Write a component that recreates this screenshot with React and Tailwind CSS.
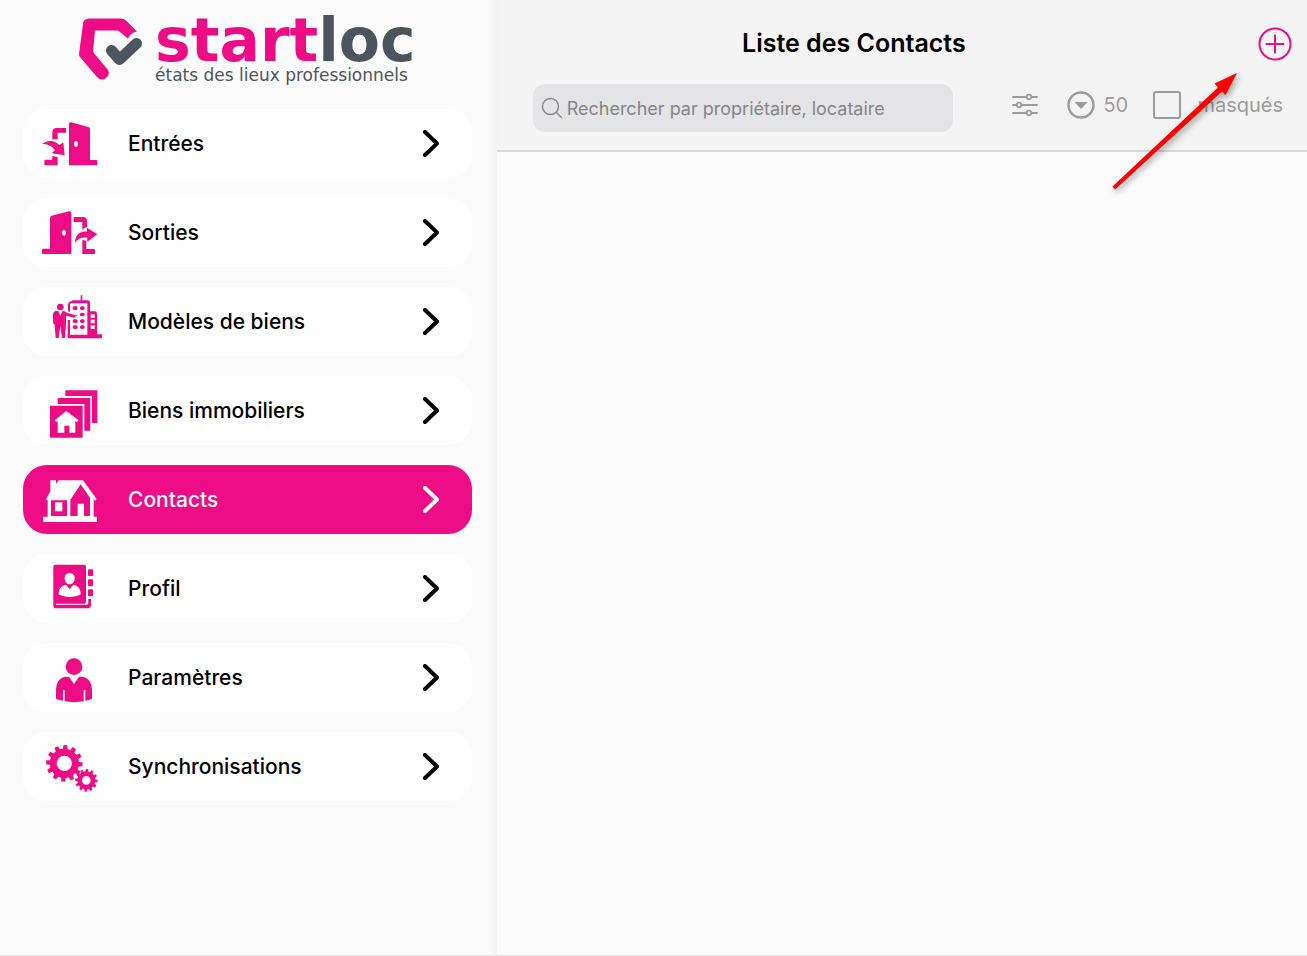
import React, { useState } from 'react';

// Contour d'une roue dentée centrée sur (cx, cy)
const gearPath = (cx, cy, outer, inner, hole, teeth) => {
  const step = (Math.PI * 2) / teeth;
  const points = [];

  for (let i = 0; i < teeth; i++) {
    const a = i * step - Math.PI / 2 + 0.06;
    [
      [inner, -0.3],
      [outer, -0.2],
      [outer, 0.2],
      [inner, 0.3],
    ].forEach(([r, k]) => {
      points.push(`${(cx + r * Math.cos(a + k * step)).toFixed(1)} ${(cy + r * Math.sin(a + k * step)).toFixed(1)}`);
    });
  }

  return `M${points.join('L')}Z M${cx - hole} ${cy}a${hole} ${hole} 0 1 0 ${hole * 2} 0a${hole} ${hole} 0 1 0 ${-hole * 2} 0Z`;
};

const MenuIcon = ({ viewBox, children }) => (
  <svg className="w-16 h-[57px] shrink-0" viewBox={viewBox} fill="currentColor" aria-hidden="true">
    {children}
  </svg>
);

const EntryIcon = () => (
  <MenuIcon viewBox="60 30 192 171">
    <path fillRule="evenodd" d="M147 57q0-6 6-5l52 14q5 1 5 6v93h18q4 0 4 4v12h-85zM168 108c-8 0-8 18 0 18s8-18 0-18z" />
    <path d="M97 104V82q0-13 13-13h28v14h-25v20q-8-3-16 1z" />
    <path d="M66 117c18-14 40-12 52 4l12-9 4 39-39-6 10-9c-9-14-23-19-39-19z" />
    <path d="M97 153l16 3v25H76q-3 0-3-4v-9q0-4 4-4h20z" />
  </MenuIcon>
);

const ExitIcon = () => (
  <MenuIcon viewBox="60 297 192 171">
    <path fillRule="evenodd" d="M154 447H69q-3 0-3-4v-8q0-4 4-4h20v-93q0-5 5-6l52-13q7-1 7 6zM132 375c-8 0-8 17 0 17s8-17 0-17z" />
    <path d="M161 336h28q12 0 12 12v18l-12 6-2 6V351h-26z" />
    <path d="M165 413c1-24 16-35 36-33v-12l31 20-30 22v-12c-16-3-28 2-37 15z" />
    <path d="M187 405l12 2v25h22q4 0 4 4v11h-38z" />
  </MenuIcon>
);

const ModelIcon = () => (
  <MenuIcon viewBox="60 39 192 171">
    <circle cx="121" cy="81" r="10" />
    <path d="M106 93h9l6 15 6-15q9 0 15 6l22 6q4 4 0 8l-26-6v25l-3 42h-9l-5-35-5 35h-9l-3-40q-5-1-5-7v-24q0-8 7-10z" />
    <path d="M144 94V75q0-10 11-11l3-3h24V46h5v15h18l5 5v28h14q7 0 7 7v62h15v12H143v-11h59V72q0-2-2-2h-46q-4 0-4 4v22z" />
    <path d="M143 120h7v46h-7z" />
    {[84, 103, 123, 141].map((y) => (
      <g key={y}>
        {y !== 103 && <rect x="158" y={y - 5} width="15" height="11" rx="5" />}
        <rect x="180" y={y - 5} width="14" height="11" rx="5" />
      </g>
    ))}
    <path d="M164 102l8 5-4 3z" />
    <g fill="white">
      <rect x="212" y="103" width="12" height="11" />
      <rect x="212" y="119" width="12" height="11" />
      <rect x="212" y="136" width="12" height="11" />
    </g>
  </MenuIcon>
);

const PropertyIcon = () => (
  <MenuIcon viewBox="60 306 192 171">
    <path d="M136 331h96v98h-16v-81h-80z" />
    <path d="M113 354h98v98h-18v-80h-80z" />
    <path fillRule="evenodd" d="M90 377h98v96H90zM139 393l-35 28 5 5 4-3v35h20v-21h15v21h18v-35l5 3 5-5z" />
  </MenuIcon>
);

const HouseIcon = () => (
  <MenuIcon viewBox="60 48 192 171">
    <path fillRule="evenodd" d="M91 76h17v10l8-10h73l41 56-5 5-4-4v52h10v16H69v-16h14v-50h-6l14-26zM93 136v47h48v-47zM182 88l-31 46v49h22v-37h19v37h18v-55z" />
    <path d="M105 142h22v27h-22z" />
  </MenuIcon>
);

const AddressBookIcon = () => (
  <MenuIcon viewBox="60 314 192 171">
    <path fillRule="evenodd" d="M106 328h87q5 0 5 5v106q0 6-6 6h-84v3h92q5 0 5-5v-12h8v17q0 11-11 11h-94q-8 0-8-8V334q0-6 6-6zM149 353c-10 0-16 8-15 17 1 10 7 17 15 17s14-7 15-17c1-9-5-17-15-17zM138 389c-15 2-22 12-22 28 20 11 46 11 66 0 0-16-7-26-22-28l-11 12z" />
    <rect x="204" y="342" width="15" height="20" rx="3" />
    <rect x="204" y="372" width="15" height="21" rx="3" />
    <rect x="204" y="402" width="15" height="21" rx="3" />
  </MenuIcon>
);

const PersonIcon = () => (
  <MenuIcon viewBox="60 41 192 171">
    <circle cx="162" cy="94" r="25" />
    <path d="M134 124h13l15 22 15-22h12q27 7 27 40v26q-9 5-20 6v-31h-5v33q-29 5-57 0v-33h-5v31q-12-1-21-6v-26q0-33 26-40z" />
  </MenuIcon>
);

const GearsIcon = () => (
  <MenuIcon viewBox="60 308 192 171">
    <path fillRule="evenodd" d={gearPath(133, 384, 55, 44, 23, 12)} />
    <path fillRule="evenodd" d={gearPath(199, 435, 34, 27, 13, 12)} />
  </MenuIcon>
);

const menuItems = [
  { id: 'entrees', label: 'Entrées', Icon: EntryIcon },
  { id: 'sorties', label: 'Sorties', Icon: ExitIcon },
  { id: 'modeles', label: 'Modèles de biens', Icon: ModelIcon },
  { id: 'biens', label: 'Biens immobiliers', Icon: PropertyIcon },
  { id: 'contacts', label: 'Contacts', Icon: HouseIcon },
  { id: 'profil', label: 'Profil', Icon: AddressBookIcon },
  { id: 'parametres', label: 'Paramètres', Icon: PersonIcon },
  { id: 'synchronisations', label: 'Synchronisations', Icon: GearsIcon },
];

const Logo = () => (
  <div className="flex justify-center pt-4 h-[109px]">
    <svg className="w-16 h-16 mr-3 shrink-0" viewBox="0 0 64 64" fill="none" aria-hidden="true">
      <path fill="#ed0b86" d="M10 2.500h32q3 0 5 2l11 11q-6 1-9 7l-10-8H16L14 36l15 18q2 4-1 7-5 5-10 0L1 41q-1-1-1-3L4 8q0-5 6-5.500z" />
      <path d="M32.500 34.500L40.500 43.500L57.500 27.500" stroke="#4c545d" strokeWidth="11" strokeLinecap="round" strokeLinejoin="round" />
    </svg>
    <div className="font-['DejaVu_Sans',sans-serif] text-[#4c545d] whitespace-nowrap">
      <div className="font-bold text-[60px] leading-[48px]">
        <span className="text-[#ed0b86]">start</span>loc
      </div>
      <div className="text-[17px] leading-[22px]">états des lieux professionnels</div>
    </div>
  </div>
);

const Sidebar = ({ active, onSelect }) => (
  <aside className="relative w-[38%] shrink-0 bg-[#fbfbfb] pl-[23px] pr-[25px]">
    <Logo />
    <nav className="flex flex-col gap-5">
      {menuItems.map(({ id, label, Icon }) => (
        <a
          key={id}
          href={`#${id}`}
          onClick={() => onSelect(id)}
          className={`flex items-center h-[69px] pl-[17px] pr-[33px] rounded-3xl text-[21px] font-medium ${
            active === id ? 'bg-[#ed0b86] text-white' : 'bg-white text-black'
          }`}
        >
          <span className={active === id ? 'text-white' : 'text-[#ed0b86]'}>
            <Icon />
          </span>
          <span className="flex-1 ml-6">{label}</span>
          <svg className="w-4 h-7" viewBox="0 0 16 28" fill="none" stroke="currentColor" strokeWidth="4" strokeLinecap="round" strokeLinejoin="round" aria-hidden="true">
            <path d="M2 2L14 13.500L2 25" />
          </svg>
        </a>
      ))}
    </nav>
    <div className="absolute inset-y-0 right-0 w-2 bg-linear-to-r from-[#fbfbfb] to-[#f1f1f1]"></div>
  </aside>
);

const Header = () => {
  const [search, setSearch] = useState('');
  const [limit, setLimit] = useState('50');
  const [showHidden, setShowHidden] = useState(false);

  return (
    <header className="bg-[#f4f4f4] border-b-2 border-[#d8d8d8] pt-6 pb-[18px]">
      <div className="flex items-center h-10">
        <h1 className="flex-1 text-center text-[25px] font-semibold text-black">Liste des Contacts</h1>
        <div className="w-24 flex justify-end pr-[15px]">
          <button type="button" aria-label="Ajouter un contact">
            <svg className="w-[34px] h-[34px] block" viewBox="0 0 34 34" fill="none" stroke="#ed0b86" strokeWidth="2">
              <circle cx="17" cy="17" r="15.500" />
              <path d="M17 8.500V25.500M8.500 17H25.500" strokeLinecap="round" />
            </svg>
          </button>
        </div>
      </div>

      <div className="flex items-center mt-5 pl-9 pr-6 gap-[58px]">
        <label className="flex flex-1 min-w-0 items-center h-12 px-2 gap-1 rounded-xl bg-[#e4e4e6]">
          <svg className="w-[22px] h-[22px] shrink-0" viewBox="0 0 22 22" fill="none" stroke="#858587" strokeWidth="1.400" strokeLinecap="round" aria-hidden="true">
            <circle cx="9.500" cy="9.500" r="8" />
            <path d="M15.500 15.500L20.500 20.500" />
          </svg>
          <input
            type="text"
            value={search}
            onChange={(e) => setSearch(e.target.value)}
            aria-label="Rechercher"
            placeholder="Rechercher par propriétaire, locataire"
            className="flex-1 min-w-0 bg-transparent text-[18px] text-black placeholder:text-[#858587] outline-none"
          />
        </label>

        <div className="flex items-center pb-1.5 text-[20px] text-[#9b9b9b]">
          <button type="button" aria-label="Filtres" className="mr-[29px]">
            <svg className="w-[27px] h-6 block" viewBox="0 0 27 24" fill="none" stroke="#9b9b9b" strokeWidth="2" strokeLinecap="round">
              <path d="M2 4H15.500M20.500 4H26M2 12H5.500M10.500 12H26M2 20H15.500M20.500 20H26" />
              <circle cx="18" cy="4" r="2.300" strokeWidth="1.700" />
              <circle cx="8" cy="12" r="2.300" strokeWidth="1.700" />
              <circle cx="18" cy="20" r="2.300" strokeWidth="1.700" />
            </svg>
          </button>
          <label className="flex items-center gap-2 mr-[25px]">
            <svg className="w-7 h-7" viewBox="0 0 28 28" aria-hidden="true">
              <circle cx="14" cy="14" r="12.500" fill="none" stroke="#9b9b9b" strokeWidth="2.400" />
              <path d="M7.500 11H20.500L14 18Z" fill="#9b9b9b" />
            </svg>
            <select
              value={limit}
              onChange={(e) => setLimit(e.target.value)}
              aria-label="Nombre de contacts"
              className="appearance-none bg-transparent outline-none"
            >
              <option>50</option>
            </select>
          </label>
          <label className="flex items-center gap-4">
            <input
              type="checkbox"
              checked={showHidden}
              onChange={(e) => setShowHidden(e.target.checked)}
              className="appearance-none w-7 h-7 border-2 border-[#9b9b9b] rounded-[3px] checked:bg-[#9b9b9b]"
            />
            masqués
          </label>
        </div>
      </div>
    </header>
  );
};

// Flèche rouge qui pointe vers le bouton d'ajout
const Pointer = () => (
  <svg className="absolute top-16 right-16 w-[136px] h-[136px] pointer-events-none drop-shadow-[2px_3px_3px_rgba(0,0,0,0.35)]" viewBox="1107 64 136 136" aria-hidden="true">
    <path fill="#ff0000" d="M1237 73L1225.500 95L1222 91.500L1115 189.500L1112.500 186.500L1218 87.500L1214.500 83.500Z" />
  </svg>
);

const App = () => {
  const [active, setActive] = useState('contacts');

  return (
    <div className="flex min-h-screen bg-[#fbfbfb] border-b border-[#e8e8e8] font-['Inter',sans-serif]">
      <Sidebar active={active} onSelect={setActive} />
      <main className="relative flex-1 min-w-0">
        <Header />
        <Pointer />
      </main>
    </div>
  );
};

export default App;
